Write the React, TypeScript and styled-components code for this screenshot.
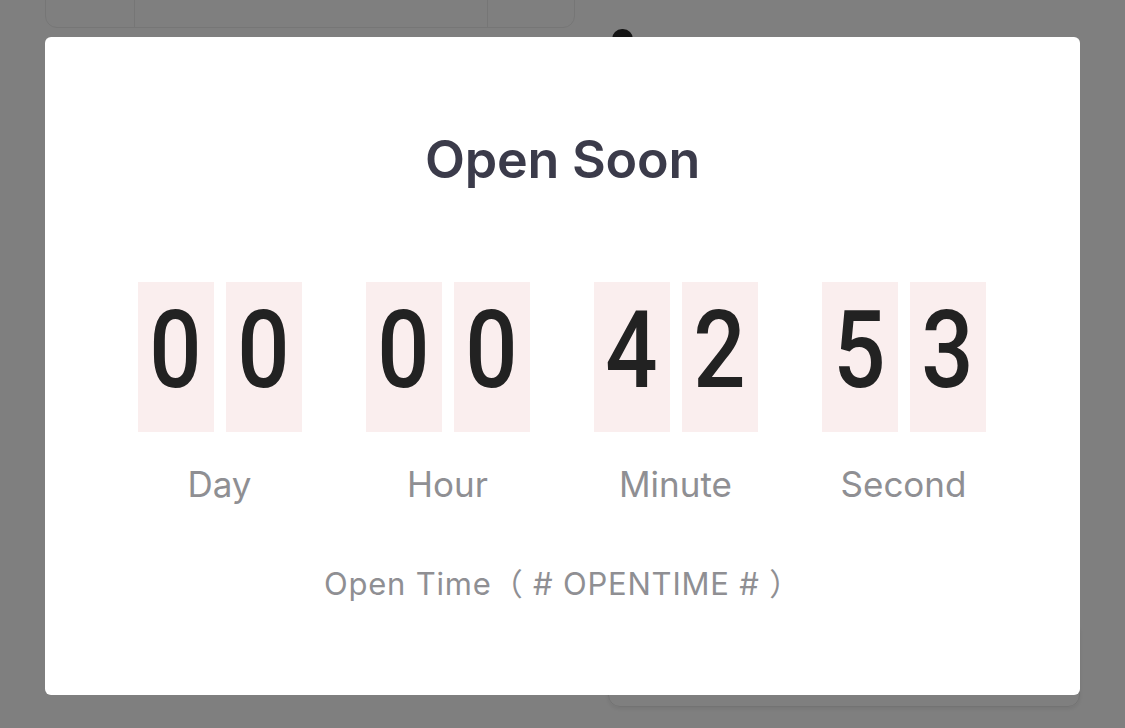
import React from "react";
import styled, { createGlobalStyle } from "styled-components";

const Global = createGlobalStyle`
  html, body { margin: 0; padding: 0; background: #ffffff; }
  body { font-family: Inter, "Noto Sans", sans-serif; overflow: hidden; }
  #root { width: 1125px; height: 728px; position: relative; }
`;

const Page = styled.div`
  width: 1125px;
  height: 728px;
  display: flex;
  flex-direction: column;
  padding: 0 45px;
  box-sizing: border-box;
`;

const TopRow = styled.div`
  display: flex;
  align-items: flex-start;
`;

const TopCard = styled.div`
  width: 530px;
  height: 40px;
  margin-top: -12px;
  display: flex;
  border: 1px solid #ececec;
  border-radius: 0 0 12px 12px;
  box-sizing: border-box;
`;

const TopCell = styled.div<{ $w: number; $last?: boolean }>`
  width: ${(p) => p.$w}px;
  flex: none;
  box-sizing: border-box;
  border-right: ${(p) => (p.$last ? "none" : "1px solid #ececec")};
`;

const Knob = styled.div`
  width: 21px;
  height: 22px;
  margin: 29px 0 0 37px;
  border-radius: 10px;
  background: #2a2a2a;
`;

const BottomCard = styled.div`
  align-self: flex-end;
  width: 472px;
  height: 80px;
  margin-top: 576px;
  border: 1px solid #e6e6e6;
  border-radius: 0 0 12px 12px;
  box-shadow: 0 2px 4px rgba(0, 0, 0, 0.08);
  box-sizing: border-box;
`;

const Overlay = styled.div`
  position: fixed;
  inset: 0;
  background: rgba(0, 0, 0, 0.5);
`;

const Modal = styled.div`
  position: fixed;
  left: 45px;
  top: 37px;
  width: 1035px;
  height: 658px;
  background: #ffffff;
  border-radius: 6px;
  display: flex;
  flex-direction: column;
  align-items: center;
  box-sizing: border-box;
  padding-top: 93px;
`;

const Title = styled.h1`
  margin: 0;
  font-family: Inter, "Noto Sans", sans-serif;
  font-weight: 600;
  font-size: 52px;
  line-height: 60px;
  color: #3b3b4a;
  letter-spacing: -0.2px;
`;

const Counter = styled.div`
  display: flex;
  gap: 64px;
  margin-top: 92px;
  margin-left: -2px;
`;

const Group = styled.div`
  display: flex;
  flex-direction: column;
  align-items: center;
`;

const Pair = styled.div`
  display: flex;
  gap: 12px;
`;

const Digit = styled.div`
  width: 76px;
  height: 150px;
  box-sizing: border-box;
  padding-bottom: 14px;
  background: #faeeee;
  display: flex;
  align-items: center;
  justify-content: center;
  font-family: Roboto, "DejaVu Sans", sans-serif;
  font-size: 107px;
  font-weight: 500;
  color: #222222;
  line-height: 1;
`;

const Glyph = styled.span`
  display: inline-block;
  transform: scaleX(0.86);
`;

const Label = styled.div`
  margin-top: 32px;
  font-family: Inter, "Noto Sans", sans-serif;
  font-size: 35px;
  line-height: 40px;
  color: #8f8f93;
`;

const OpenTime = styled.div`
  margin-top: 62px;
  font-family: Inter, "Noto Sans", "Noto Sans CJK SC", sans-serif;
  font-size: 31px;
  line-height: 36px;
  letter-spacing: 0.8px;
  color: #8f8f93;
  white-space: pre;
`;

const groups = [
  { label: "Day", value: "00" },
  { label: "Hour", value: "00" },
  { label: "Minute", value: "42" },
  { label: "Second", value: "53" },
];

export default function App() {
  return (
    <>
      <Global />
      <Page>
        <TopRow>
          <TopCard>
            <TopCell $w={89} />
            <TopCell $w={353} />
            <TopCell $w={88} $last />
          </TopCard>
          <Knob />
        </TopRow>
        <BottomCard />
      </Page>
      <Overlay />
      <Modal>
        <Title>Open Soon</Title>
        <Counter>
          {groups.map((g) => (
            <Group key={g.label}>
              <Pair>
                {g.value.split("").map((d, i) => (
                  <Digit key={i}>
                    <Glyph>{d}</Glyph>
                  </Digit>
                ))}
              </Pair>
              <Label>{g.label}</Label>
            </Group>
          ))}
        </Counter>
        <OpenTime>{"Open Time（ # OPENTIME # ）"}</OpenTime>
      </Modal>
    </>
  );
}
